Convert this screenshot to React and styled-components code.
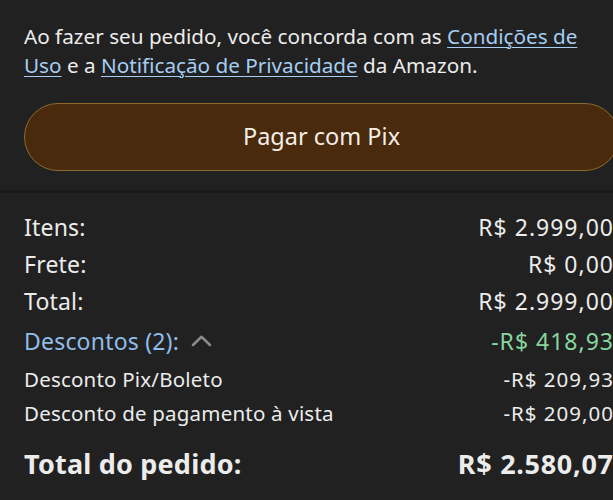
import React from "react";
import styled, { createGlobalStyle } from "styled-components";

const Global = createGlobalStyle`
  html, body { margin: 0; padding: 0; background: #212121; overflow: hidden; }
  body { font-family: "Noto Sans", "Open Sans", sans-serif; color: #ececec; }
`;

const Page = styled.div`
  width: 613px;
  height: 500px;
  background: #212121;
  display: flex;
  flex-direction: column;
`;

const Top = styled.section`
  padding: 22px 0 19px 24px;
  display: flex;
  flex-direction: column;
  gap: 23px;
`;

const Legal = styled.p`
  margin: 0;
  font-size: 20.7px;
  line-height: 29px;
  color: #ececec;
  padding-right: 12px;
`;

const Link = styled.a`
  color: #a6cdf2;
  text-decoration: underline;
  text-underline-offset: 3px;
  text-decoration-thickness: 1px;
`;

const PayButton = styled.button`
  margin-right: -6px;
  height: 68px;
  border-radius: 34px;
  background: #4a2a0d;
  border: 1.5px solid #8c6a2c;
  color: #f4efe6;
  font-family: inherit;
  font-size: 23.5px;
  display: flex;
  align-items: center;
  justify-content: center;
  padding: 0 0 2px 0;
`;

const Divider = styled.div`
  height: 3px;
  background: #191919;
`;

const Summary = styled.section`
  padding: 15px 0 0 24px;
  display: flex;
  flex-direction: column;
`;

const Row = styled.div`
  display: flex;
  justify-content: space-between;
  align-items: center;
  height: ${(p) => p.$h}px;
  font-size: ${(p) => p.$size}px;
  font-weight: ${(p) => (p.$bold ? 700 : 400)};
  color: ${(p) => p.$color || "#ececec"};
  letter-spacing: 0.2px;
`;

const Value = styled.span`
  color: ${(p) => p.$color || "inherit"};
  letter-spacing: ${(p) => p.$ls ?? 1}px;
  margin-right: -${(p) => p.$ls ?? 1}px;
`;

const Toggle = styled.span`
  display: inline-flex;
  align-items: center;
  gap: 12px;
`;

const Chevron = () => (
  <svg width="21" height="13" viewBox="0 0 21 13" fill="none">
    <path d="M2 11 L10.5 2.8 L19 11" stroke="#8a8a8a" strokeWidth="2.6" strokeLinecap="round" strokeLinejoin="round" />
  </svg>
);

export default function App() {
  return (
    <>
      <Global />
      <Page>
        <Top>
          <Legal>
            Ao fazer seu pedido, você concorda com as <Link href="#">Condições de</Link>{" "}
            <Link href="#">Uso</Link> e a <Link href="#">Notificação de Privacidade</Link> da Amazon.
          </Legal>
          <PayButton>Pagar com Pix</PayButton>
        </Top>
        <Divider />
        <Summary>
          <Row $h={37} $size={23}>
            <span>Itens:</span>
            <Value>R$ 2.999,00</Value>
          </Row>
          <Row $h={37} $size={23}>
            <span>Frete:</span>
            <Value>R$ 0,00</Value>
          </Row>
          <Row $h={37} $size={23}>
            <span>Total:</span>
            <Value>R$ 2.999,00</Value>
          </Row>
          <Row $h={43} $size={23} $color="#8fbde8">
            <Toggle>
              Descontos (2):
              <Chevron />
            </Toggle>
            <Value $color="#86d6a0">-R$ 418,93</Value>
          </Row>
          <Row $h={34} $size={20.5}>
            <span>Desconto Pix/Boleto</span>
            <Value>-R$ 209,93</Value>
          </Row>
          <Row $h={34} $size={20.5}>
            <span>Desconto de pagamento à vista</span>
            <Value>-R$ 209,00</Value>
          </Row>
          <Row $h={66} $size={27} $bold>
            <span>Total do pedido:</span>
            <Value $ls={0.7}>R$ 2.580,07</Value>
          </Row>
        </Summary>
      </Page>
    </>
  );
}
